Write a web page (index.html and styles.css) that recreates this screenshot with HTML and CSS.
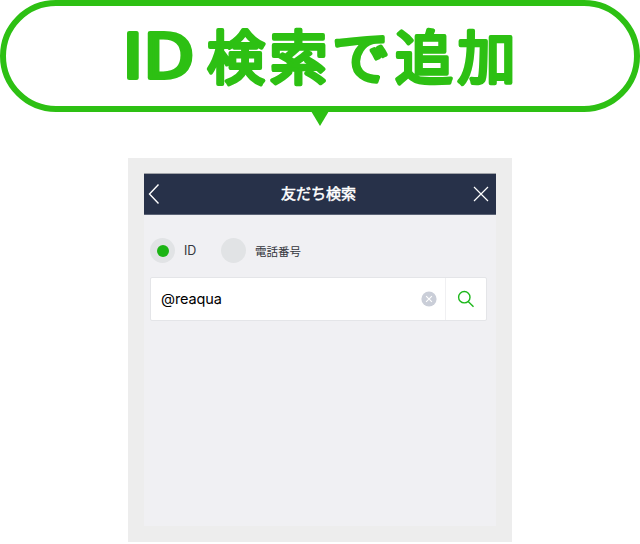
FILE: index.html
```
<!DOCTYPE html>
<html lang="ja">
<head>
<meta charset="utf-8">
<title>ID検索で追加</title>
<link rel="stylesheet" href="styles.css">
</head>
<body>
<h1 class="bubble">
  <svg class="heading" viewBox="0 0 400 80" role="img">
    <text class="latin" transform="translate(1 62) scale(1.24 1)" x="0.6 17.4">ID</text>
    <text class="kanji" x="87 149.5 212 275 337.5" y="63">検索で追加</text>
  </svg>
</h1>
<main class="frame">
  <section class="phone">
    <header class="bar">
      <svg class="back" viewBox="0 0 12 22"><path d="M10.5 1.5 1.5 11l9 9.5"/></svg>
      <h2>友だち検索</h2>
      <svg class="close" viewBox="0 0 16 16"><path d="m1 1 14 14M15 1 1 15"/></svg>
    </header>
    <div class="options">
      <span class="radio on"></span><span class="label id">ID</span>
      <span class="radio"></span><span class="label">電話番号</span>
    </div>
    <div class="search">
      <span class="query">@reaqua</span>
      <svg class="clear" viewBox="0 0 16 16"><circle cx="8" cy="8" r="7.6"/><path d="m5.1 5.1 5.8 5.8m0-5.8-5.8 5.8"/></svg>
      <span class="go"><svg viewBox="0 0 18 18"><circle cx="7.3" cy="7.2" r="5.7"/><path d="m11.2 11.5 5.3 5.2"/></svg></span>
    </div>
  </section>
</main>
</body>
</html>
```
FILE: styles.css
```
* { box-sizing: border-box; }
body {
  margin: 0;
  width: 640px;
  height: 544px;
  background: #fff;
  font-family: Inter, "Noto Sans CJK JP", sans-serif;
  overflow: hidden;
}
.bubble {
  position: relative;
  display: flex;
  justify-content: center;
  align-items: center;
  height: 112px;
  margin: 0;
  border: 6px solid #2dc013;
  border-radius: 56px;
}
.bubble::after {
  content: "";
  position: absolute;
  top: 105px;
  left: 305px;
  border: solid transparent;
  border-width: 15px 9px 0;
  border-top-color: #2dc013;
}
.heading {
  width: 400px;
  height: 80px;
  overflow: visible;
}
.heading text {
  font: 400 58px "Noto Sans CJK JP", sans-serif;
  fill: #2dc013;
  stroke: #2dc013;
  stroke-width: 3.9px;
  stroke-linejoin: round;
}
.heading .latin { font-size: 61px; stroke-width: 3.8px; }
.frame {
  width: 384px;
  height: 384px;
  margin: 46px auto 0;
  padding: 15px 16px 16px;
  background: #ededed;
}
.phone {
  height: 353px;
  background: #f0f0f3;
}
.bar {
  display: flex;
  justify-content: space-between;
  align-items: center;
  height: 42px;
  padding: 0 7px 1px 4px;
  background: #273149;
  border-top: 1px solid #a1a4a9;
  border-bottom: 1px solid #5b6376;
}
.bar h2 {
  margin: -2px 0 0 4px;
  color: #fff;
  font: 400 15px/20px "Noto Sans CJK JP", sans-serif;
  -webkit-text-stroke: 0.5px #fff;
}
svg path { fill: none; }
.back { width: 12px; height: 22px; stroke: #fff; stroke-width: 1.4; }
.close { width: 16px; height: 16px; stroke: #fff; stroke-width: 1.2; }
.options {
  display: flex;
  align-items: center;
  height: 25px;
  margin: 23px 0 0 6px;
}
.radio {
  display: flex;
  justify-content: center;
  align-items: center;
  width: 25px;
  height: 25px;
  border-radius: 50%;
  background: #e1e3e5;
}
.on::before {
  content: "";
  width: 12px;
  height: 12px;
  border-radius: 50%;
  background: #1bb414;
}
.label {
  margin-left: 9px;
  color: #34373d;
  font: 400 11.5px/16px "Noto Sans CJK JP", sans-serif;
}
.id { width: 37px; font: 400 12.5px/16px Inter, sans-serif; }
.search {
  display: flex;
  align-items: center;
  width: 337px;
  height: 44px;
  margin: 14px 0 0 6px;
  padding-left: 10px;
  background: #fff;
  border: 1px solid #e4e5e8;
  border-radius: 2px;
}
.query {
  flex: 1;
  padding-bottom: 1px;
  color: #000;
  font-size: 14.5px;
  letter-spacing: -0.1px;
}
.clear { width: 16px; height: 16px; margin-right: 8px; }
.clear circle { fill: #caced8; }
.clear path { stroke: #fff; stroke-width: 1.1; }
.go {
  display: flex;
  align-items: center;
  justify-content: center;
  width: 41px;
  height: 42px;
  border-left: 1px solid #f0f0f2;
}
.go svg { width: 18px; height: 18px; fill: none; stroke: #1cb71a; stroke-width: 1.4; }
```
